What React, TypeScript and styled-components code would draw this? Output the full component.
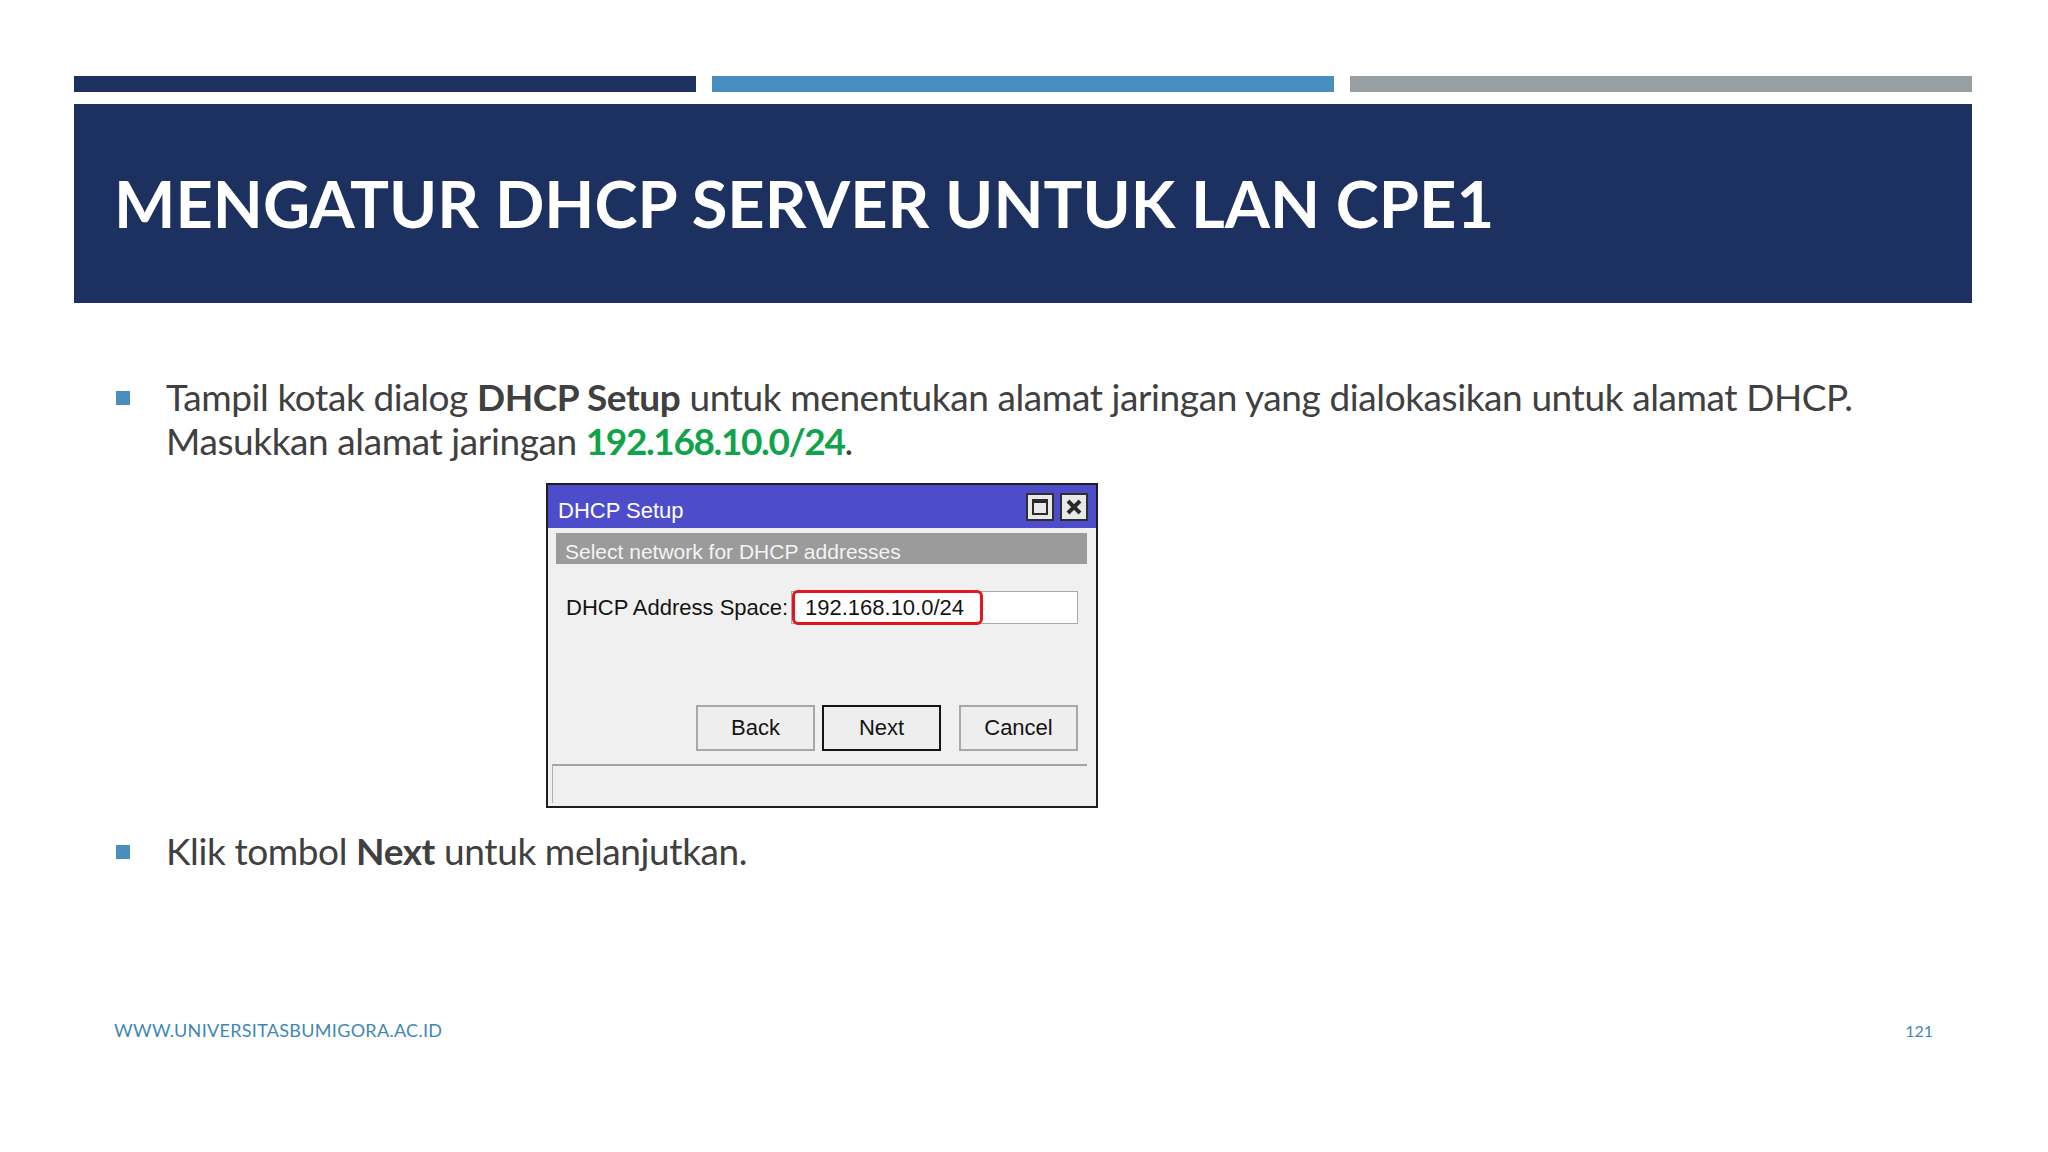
import React from 'react';
import styled, { createGlobalStyle } from 'styled-components';

const GlobalStyle = createGlobalStyle`
  html, body {
    margin: 0;
    padding: 0;
    background: #ffffff;
  }
  body {
    font-family: Lato, "Noto Sans", sans-serif;
  }
`;

const Slide = styled.div`
  width: 2048px;
  height: 1152px;
  box-sizing: border-box;
  padding: 76px 76px 111px 74px;
  display: flex;
  flex-direction: column;
  background: #ffffff;
`;

const Bars = styled.div`
  display: grid;
  grid-template-columns: repeat(3, 1fr);
  column-gap: 16px;
  height: 16px;
`;

const Bar = styled.div<{ $color: string }>`
  background: ${(p) => p.$color};
`;

const Header = styled.header`
  margin-top: 12px;
  height: 199px;
  background: #1c3160;
  display: flex;
  align-items: center;
  padding-left: 40px;
`;

const Title = styled.h1`
  margin: 0;
  font: 700 65px/1 Lato, sans-serif;
  color: #ffffff;
`;

const Content = styled.div`
  flex: 1;
  margin-top: 72px;
  margin-left: 42px;
  display: flex;
  flex-direction: column;
`;

const Point = styled.div`
  display: flex;
  gap: 36px;
  font: 400 37px/44px Lato, sans-serif;
  letter-spacing: -0.4px;
  color: #404040;
`;

const Bullet = styled.span`
  flex-shrink: 0;
  width: 14px;
  height: 14px;
  margin-top: 16px;
  background: #4a8ec0;
`;

const Strong = styled.b`
  font-weight: 700;
`;

const Green = styled.b`
  font-weight: 700;
  color: #10a34b;
  letter-spacing: -1.4px;
`;

const DialogRow = styled.div`
  margin: 20px 0 21px 430px;
`;

/* ---- dialog ---- */

const Window = styled.div`
  width: 552px;
  height: 325px;
  box-sizing: border-box;
  border: 2px solid #1e1e1e;
  background: #f0f0f0;
  display: flex;
  flex-direction: column;
  font-family: "Liberation Sans", Arial, sans-serif;
  color: #141414;
`;

const TitleBar = styled.div`
  height: 43px;
  flex-shrink: 0;
  background: #4d4dcc;
  display: flex;
  align-items: center;
  justify-content: space-between;
  padding: 0 8px 0 10px;
`;

const WindowTitle = styled.span`
  padding-top: 8px;
  color: #ffffff;
  font-size: 22px;
`;

const TitleButtons = styled.div`
  display: flex;
  gap: 6px;
`;

const TitleButton = styled.div`
  width: 28px;
  height: 28px;
  box-sizing: border-box;
  border: 2px solid #2e2e2e;
  background: #e8e8e8;
  display: flex;
  align-items: center;
  justify-content: center;
`;

const MaxGlyph = styled.span`
  width: 16px;
  height: 16px;
  box-sizing: border-box;
  border: 2px solid #2a2a2a;
  border-top-width: 4px;
`;

const Band = styled.div`
  height: 31px;
  box-sizing: border-box;
  margin: 5px 9px 0 8px;
  padding: 7px 0 0 9px;
  background: #9b9b9b;
  color: #f4f4f4;
  font-size: 21px;
  line-height: 24px;
`;

const FormRow = styled.div`
  margin-top: 27px;
  padding: 0 18px;
  display: flex;
  align-items: center;
  justify-content: space-between;
`;

const Label = styled.span`
  font-size: 22px;
`;

const InputBox = styled.div`
  position: relative;
  width: 287px;
  height: 33px;
  box-sizing: border-box;
  border: 1px solid #a9a9a9;
  background: #ffffff;
  padding-left: 13px;
  font-size: 22px;
  line-height: 31px;
`;

const Highlight = styled.span`
  position: absolute;
  left: 0;
  top: -2px;
  width: 191px;
  height: 35px;
  box-sizing: border-box;
  border: 3px solid #e3161e;
  border-radius: 6px;
`;

const ButtonRow = styled.div`
  margin-top: 81px;
  padding-right: 18px;
  display: flex;
  justify-content: flex-end;
`;

const Button = styled.div<{ $default?: boolean; $gap: number }>`
  width: 119px;
  height: 46px;
  box-sizing: border-box;
  margin-left: ${(p) => p.$gap}px;
  border: 2px solid ${(p) => (p.$default ? '#141414' : '#a8a8a8')};
  background: #eeeeee;
  display: flex;
  align-items: center;
  justify-content: center;
  font-size: 22px;
`;

const StatusBar = styled.div`
  height: 39px;
  box-sizing: border-box;
  margin: 13px 9px 0 4px;
  border-top: 2px solid #a3a3a3;
  border-left: 1px solid #b0b0b0;
`;

/* ---- footer ---- */

const Footer = styled.footer`
  display: flex;
  justify-content: space-between;
  align-items: baseline;
  padding: 0 39px 0 40px;
  font: 400 18px/20px Lato, sans-serif;
  color: #3f87b5;
`;

const Site = styled.span`
  letter-spacing: 0.3px;
`;

const PageNo = styled.span`
  font-size: 16px;
`;

function DhcpDialog() {
  return (
    <Window>
      <TitleBar>
        <WindowTitle>DHCP Setup</WindowTitle>
        <TitleButtons>
          <TitleButton>
            <MaxGlyph />
          </TitleButton>
          <TitleButton>
            <svg width="16" height="16" viewBox="0 0 16 16">
              <path d="M2 2 L14 14 M14 2 L2 14" stroke="#2a2a2a" strokeWidth="4" />
            </svg>
          </TitleButton>
        </TitleButtons>
      </TitleBar>
      <Band>Select network for DHCP addresses</Band>
      <FormRow>
        <Label>DHCP Address Space:</Label>
        <InputBox>
          192.168.10.0/24
          <Highlight />
        </InputBox>
      </FormRow>
      <ButtonRow>
        <Button $gap={0}>Back</Button>
        <Button $gap={7} $default>
          Next
        </Button>
        <Button $gap={18}>Cancel</Button>
      </ButtonRow>
      <StatusBar />
    </Window>
  );
}

export default function App() {
  return (
    <>
      <GlobalStyle />
      <Slide>
        <Bars>
          <Bar $color="#1c3160" />
          <Bar $color="#4a8ec0" />
          <Bar $color="#99a0a4" />
        </Bars>
        <Header>
          <Title>MENGATUR DHCP SERVER UNTUK LAN CPE1</Title>
        </Header>
        <Content>
          <Point>
            <Bullet />
            <span>
              Tampil kotak dialog <Strong>DHCP Setup</Strong> untuk menentukan alamat jaringan yang dialokasikan untuk alamat DHCP.
              <br />
              Masukkan alamat jaringan <Green>192.168.10.0/24</Green>.
            </span>
          </Point>
          <DialogRow>
            <DhcpDialog />
          </DialogRow>
          <Point>
            <Bullet />
            <span>
              Klik tombol <Strong>Next</Strong> untuk melanjutkan.
            </span>
          </Point>
        </Content>
        <Footer>
          <Site>WWW.UNIVERSITASBUMIGORA.AC.ID</Site>
          <PageNo>121</PageNo>
        </Footer>
      </Slide>
    </>
  );
}
